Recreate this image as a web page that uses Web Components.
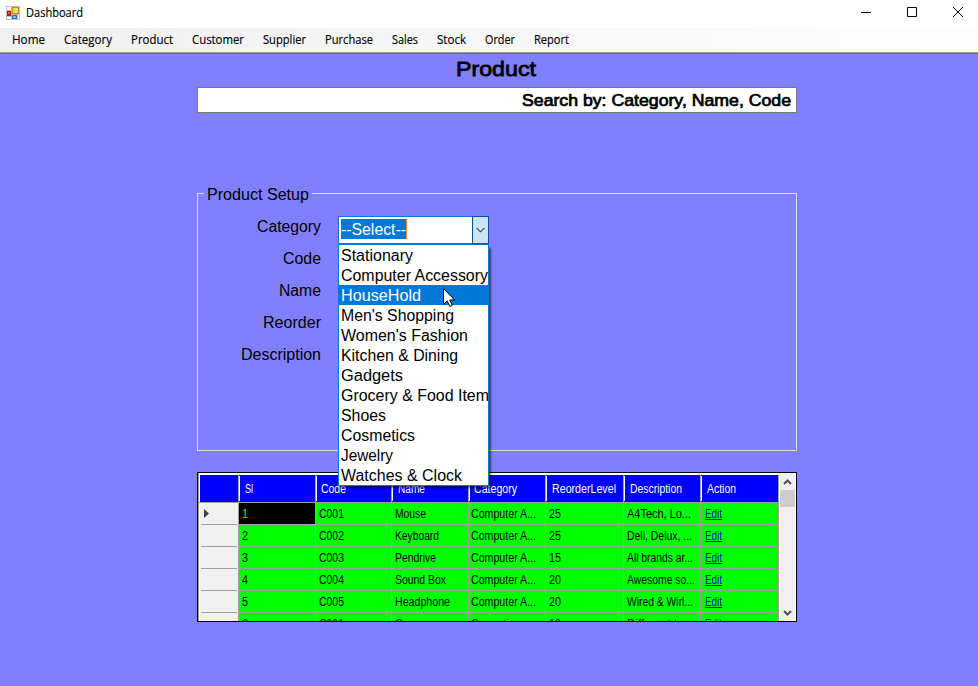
<!DOCTYPE html>
<html lang="en"><head><meta charset="utf-8"><title>Dashboard</title>
<style>html,body{margin:0;height:100%;overflow:hidden;background:#8080ff}</style></head><body>
<dash-window></dash-window>
<script>
const define=(name,html,setup)=>customElements.define(name,class extends HTMLElement{
  connectedCallback(){ if(this.shadowRoot)return; this.attachShadow({mode:'open'}).innerHTML=html(this); if(setup)setup(this); }
});
// Text run drawn at an exact width: <fit-text w="40">
define('fit-text',()=>`<style>:host{display:block;white-space:pre;flex:none}span{display:inline-block;transform-origin:0 50%;white-space:pre}</style><span><slot></slot></span>`,el=>{
  const s=el.shadowRoot.querySelector('span'),w=+el.getAttribute('w');
  if(w){el.style.width=w+'px';const n=s.getBoundingClientRect().width;if(n)s.style.transform=`scaleX(${w/n})`;}
});
define('title-bar',()=>`<style>:host{display:flex;height:28px;background:#fff;font:12px "Open Sans",sans-serif;align-items:center;box-sizing:border-box;padding:0 14px 3px 6px;-webkit-text-stroke:.15px #000}
.g{flex:1}fit-text{margin-left:6px;line-height:16px}svg{display:block}.c{display:flex;gap:34px;padding-bottom:1px}</style>
<svg width="14" height="14" viewBox="0 0 14 14" shape-rendering="crispEdges"><path fill="#bdbdbd" d="M0 0h14v14H0z"/><path fill="#fff" d="M1 1h4v3H1zM1 11h4v2H1zM12 9h1v4h-1z"/><path fill="#a61c14" d="M1 5h4v5H1z"/><path fill="#df6a58" d="M2 6h2v2H2z"/><path fill="#c98a06" d="M6 1h7v7H6z"/><path fill="#ffd75b" d="M7 2h5v5H7z"/><path fill="#2e6ad0" d="M6 9h5v4H6z"/><path fill="#7cb4fb" d="M7 10h3v2H7z"/></svg>
<fit-text w="57">Dashboard</fit-text><span class="g"></span>
<div class="c"><svg width="12" height="12"><path d="M1 6.500h10" stroke="#000"/></svg><svg width="12" height="12"><path d="M1.500 1.500h9v9h-9z" fill="none" stroke="#000"/></svg><svg width="12" height="12"><path d="M1 1l10 10M11 1L1 11" stroke="#000"/></svg></div>`);
define('menu-bar',()=>`<style>:host{display:flex;height:26px;box-sizing:border-box;padding:4px 0 0 12px;gap:19px;-webkit-text-stroke:.15px #000;font:12px/16px "Open Sans",sans-serif;background:linear-gradient(#a0a0a0,#a0a0a0) 0 24px/100% 1px no-repeat,linear-gradient(#696969,#696969) 0 25px/100% 1px no-repeat,linear-gradient(90deg,#f0f0f0,#fdfdfd)}</style>`+
[['Home',33],['Category',48],['Product',42],['Customer',52],['Supplier',43],['Purchase',48],['Sales',26],['Stock',29],['Order',30],['Report',35]].map(([t,w])=>`<fit-text w="${w}">${t}</fit-text>`).join(''));
define('search-box',()=>`<style>:host{display:flex;justify-content:flex-end;box-sizing:border-box;width:600px;height:26px;border:1px solid #7a7a7a;background:#fff;padding:3px 5px 0 0;font:16px/20px "Liberation Sans",sans-serif;-webkit-text-stroke:.7px #000}</style><fit-text w="269">Search by: Category, Name, Code</fit-text>`);
define('select-box',()=>{
 const items=[['Stationary',72],['Computer Accessory',147],['HouseHold',80],["Men's Shopping",113],["Women's Fashion",127],['Kitchen & Dining',117],['Gadgets',62],['Grocery & Food Item',148],['Shoes',45],['Cosmetics',74],['Jewelry',52],['Watches & Clock',121]];
 return `<style>:host{display:block;position:relative;width:151px;height:28px;font:16px/22px "Liberation Sans",sans-serif}
.f{display:flex;height:28px;box-sizing:border-box;border:1px solid #0078d7;background:#fff;padding:2px 0 0 2px}
.s{background:#0078d7;color:#fff;height:20px;border-right:1px solid #ff8a2a;width:65px}.g{flex:1}
.b{width:15px;height:26px;margin:-3px -1px 0 0;border:1px solid #005499;background:#cce4f7;display:grid;place-items:center}
.l{position:absolute;top:28px;left:0;width:149px;border:1px solid #0078d7;background:#fff;box-shadow:3px 3px 2px -1px rgba(0,0,0,.55);z-index:3}
.i{height:20px;padding-left:2px;overflow:hidden}.h{background:#0078d7;color:#fff}
.p{position:absolute;left:105px;top:72px;z-index:4}</style>
<div class="f"><div class="s"><fit-text w="65">--Select--</fit-text></div><span class="g"></span><div class="b"><svg width="9" height="6"><path d="M.5.8l4 4 4-4" fill="none" stroke="#444" stroke-width="1.1"/></svg></div></div>
<div class="l">${items.map(([t,w],i)=>`<div class="i ${i==2?'h':''}"><fit-text w="${w}">${t.replace('&','&amp;')}</fit-text></div>`).join('')}</div>
<svg class="p" width="13" height="20"><path d="M.5.5v16l3.700-3.600 2.600 5.600 2.500-1.100-2.600-5.400h5z" fill="#fff" stroke="#000"/></svg>`});
define('product-setup',()=>`<style>:host{display:block;width:600px;height:267px;font:16px/20px "Liberation Sans",sans-serif}
fieldset{margin:0;height:100%;box-sizing:border-box;border:1px solid #dcdcdc;padding:0 0 0 6px;min-width:0}
legend{padding:0 3px;height:18px;line-height:22px}
.r{display:grid;grid-template-columns:117px 151px;column-gap:17px;margin-top:14px}
.a{display:grid;grid-auto-rows:32px;justify-items:end;line-height:22px}</style>
<fieldset><legend><fit-text w="102">Product Setup</fit-text></legend><div class="r"><div class="a"><fit-text w="64">Category</fit-text><fit-text w="38">Code</fit-text><fit-text w="42">Name</fit-text><fit-text w="58">Reorder</fit-text><fit-text w="80">Description</fit-text></div><select-box></select-box></div></fieldset>`);
define('product-grid',()=>{
 const head=[['Sl',8],['Code',25],['Name',27],['Category',43],['ReorderLevel',64],['Description',52],['Action',29]];
 const names=[['Mouse',31],['Keyboard',44],['Pendrive',41],['Sound Box',51],['Headphone',55],['Cream',32]];
 const d=[['A4Tech, Lo...',64],['Dell, Delux, ...',65],['All brands ar...',66],['Awesome so...',68],['Wired & Wirl...',66],['Different t...',60]];
 const q=[25,25,15,20,20,10],code=['C001','C002','C003','C004','C005','C001'];
 const pad=[3,3,3,2,3,3,4],hpad=[6,5,6,5,6,6,6];
 const row=i=>`<div class="r"><div class="k">${i?'':'<svg width="5" height="9"><path d="M0 0l5 4.500-5 4.500z" fill="#404040"/></svg>'}</div>`+[[i+1,6],[code[i],25],names[i],[i==5?'Cosmetics':'Computer A...',i==5?48:65],[q[i],12],d[i],['Edit',17]].map(([t,w],j)=>`<div class="c ${!i&&!j?'sel':''} ${j==6?'e':''}" style="padding-left:${pad[j]}px"><fit-text w="${w}">${String(t).replace('&','&amp;')}</fit-text></div>`).join('')+`</div>`;
 return `<style>:host{display:flex;width:600px;height:150px;box-sizing:border-box;border:1px solid #000;background:#fff;font:12px/15px "Liberation Sans",sans-serif;overflow:hidden}
.t{width:581px;height:148px;overflow:hidden;border-left:1px solid #a0a0a0;box-sizing:border-box}
.h,.r{display:grid;grid-template-columns:40px 77px 76px 77px 77px 78px 77px 78px}
.h{height:30px;box-sizing:border-box;background:#00f;color:#fff;border-bottom:1px solid #a0a0a0;border-top:2px solid #fff}
.h div{box-sizing:border-box;border-right:1px solid #a0a0a0;padding:7px 0 0 5px;background:linear-gradient(#fff,#fff) 0 1px/1px 25px no-repeat}
.h div:first-child{background-size:1px 27px;background-position:0 0}
.r{height:22px}.k{display:flex;align-items:center;padding:0 0 1px 5px;box-sizing:border-box;border-right:1px solid #a0a0a0;
background:linear-gradient(#a0a0a0,#a0a0a0) 2px 21px/36px 1px no-repeat,linear-gradient(#fff,#fff) 0 0/1px 100% no-repeat,#f0f0f0}
.c{box-sizing:border-box;background:#0f0;border-right:1px solid #a0a0a0;border-bottom:1px solid #a0a0a0;padding-top:4px}
.sel{background:#000;color:#0f0}.e{color:#00f}.e fit-text{height:14px;background:linear-gradient(#00f,#00f) 0 12px/100% 1px no-repeat}
.s{width:15px;margin-left:1px;background:#f0f0f0;display:flex;flex-direction:column;align-items:center;padding:6px 0 5px;box-sizing:border-box}
.th{width:15px;height:17px;background:#cdcdcd;margin-top:5px}.g{flex:1}</style>
<div class="t"><div class="h"><div></div>${head.map(([t,w],i)=>`<div style="padding-left:${hpad[i]}px"><fit-text w="${w}">${t}</fit-text></div>`).join('')}</div>${[0,1,2,3,4,5].map(row).join('')}</div>
<div class="s"><svg width="9" height="6"><path d="M1 5l3.500-3.500L8 5" fill="none" stroke="#505050" stroke-width="2"/></svg><div class="th"></div><span class="g"></span><svg width="9" height="6"><path d="M1 1l3.500 3.500L8 1" fill="none" stroke="#505050" stroke-width="2"/></svg></div>`});
define('dash-window',()=>`<style>:host{display:block;width:978px;height:686px;background:#8080ff;color:#000}
main{padding-left:197px}.t{font:21px/24px "Liberation Sans",sans-serif;-webkit-text-stroke:.8px #000;padding:3px 0 0 259px;height:30px}
product-setup{margin-top:71px}product-grid{margin-top:21px}</style>
<title-bar></title-bar><menu-bar></menu-bar><main><div class="t"><fit-text w="80">Product</fit-text></div><search-box></search-box><product-setup></product-setup><product-grid></product-grid></main>`);
</script></body></html>
